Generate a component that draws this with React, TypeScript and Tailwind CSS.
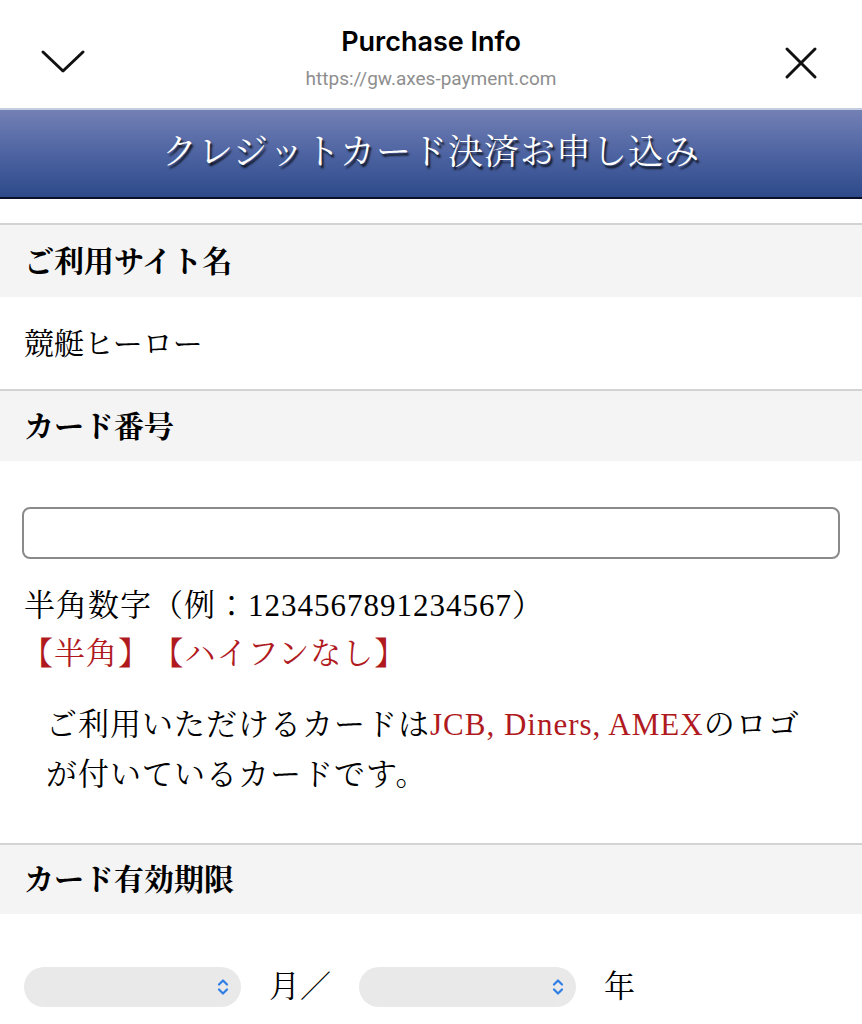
import { useState } from 'react';

const serif = {
    fontFamily: '"Liberation Serif", "Noto Serif CJK JP", "Noto Sans CJK JP", serif',
};

function SelectBox({ value, onChange }: { value: string; onChange: (v: string) => void }) {
    return (
        <div className="relative w-[217px] h-[40px] rounded-[20px] bg-[#e9e9e9]">
            <select
                value={value}
                onChange={(e) => onChange(e.target.value)}
                className="w-full h-full appearance-none bg-transparent rounded-[20px] pl-4 pr-10 text-[20px] outline-none"
            >
                <option value=""></option>
            </select>
            <svg
                className="absolute right-[12px] top-1/2 -translate-y-1/2 pointer-events-none"
                width="12"
                height="20"
                viewBox="0 0 12 20"
                fill="none"
                stroke="#2f7ee6"
                strokeWidth="2.2"
                strokeLinecap="round"
                strokeLinejoin="round"
            >
                <path d="M2 7.5 L6 3.5 L10 7.5" />
                <path d="M2 12.5 L6 16.5 L10 12.5" />
            </svg>
        </div>
    );
}

export default function App() {
    const [cardNo, setCardNo] = useState('');
    const [month, setMonth] = useState('');
    const [year, setYear] = useState('');

    return (
        <div className="w-[862px] min-h-[1024px] bg-white text-black overflow-hidden">
            {/* Header bar */}
            <div className="relative h-[108px] bg-white flex flex-col items-center">
                <button className="absolute left-[40px] top-[46px]">
                    <svg width="46" height="30" viewBox="0 0 46 30" fill="none" stroke="#111" strokeWidth="3" strokeLinecap="round" strokeLinejoin="round">
                        <path d="M3 6 L23 25 L43 6" />
                    </svg>
                </button>
                <div className="pt-[24px] text-[27px] leading-[36px] font-semibold" style={{ fontFamily: 'Inter, Roboto, sans-serif' }}>
                    Purchase Info
                </div>
                <div className="mt-[7px] text-[19px] leading-[24px] text-[#8e8e8e]" style={{ fontFamily: 'Roboto, Inter, sans-serif' }}>
                    https://gw.axes-payment.com
                </div>
                <button className="absolute right-[44px] top-[46px]">
                    <svg width="34" height="34" viewBox="0 0 34 34" fill="none" stroke="#111" strokeWidth="3" strokeLinecap="round">
                        <path d="M3 3 L31 31" />
                        <path d="M31 3 L3 31" />
                    </svg>
                </button>
            </div>

            {/* Title banner */}
            <div className="border-t-2 border-[#c5cde0]">
                <div className="h-[89px] flex items-center justify-center bg-gradient-to-b from-[#7380b4] via-[#4e64a2] to-[#2e4a8a] border-b-2 border-[#0b0f2a]">
                    <h1
                        className="text-[35px] text-white tracking-[1px] [text-shadow:2px_3px_2px_rgba(0,0,0,0.75)]"
                        style={serif}
                    >
                        クレジットカード決済お申し込み
                    </h1>
                </div>
            </div>

            <div className="h-[24px]" />

            <div style={serif}>
                {/* Site name */}
                <div className="border-t-2 border-[#d3d3d3] bg-[#f4f4f4] h-[74px] flex items-center px-[24px]">
                    <h2 className="text-[30px] font-bold">ご利用サイト名</h2>
                </div>
                <div className="h-[92px] flex items-center px-[24px] text-[30px]">競艇ヒーロー</div>

                {/* Card number */}
                <div className="border-t-2 border-[#d3d3d3] bg-[#f4f4f4] h-[72px] flex items-center px-[24px]">
                    <h2 className="text-[30px] font-bold">カード番号</h2>
                </div>
                <div className="px-[22px] pt-[46px] pb-[43px]">
                    <input
                        value={cardNo}
                        onChange={(e) => setCardNo(e.target.value)}
                        className="w-full h-[52px] rounded-[8px] border-2 border-[#8a8a8a] px-3 text-[24px] outline-none"
                    />
                    <p className="mt-[27px] pl-[2px] text-[31px] leading-[40px] tracking-[1px]">半角数字（例：1234567891234567）</p>
                    <p className="mt-[8px] text-[31px] leading-[40px] tracking-[1px] text-[#b01a1e]">
                        <span>【半角】</span>
                        <span className="ml-[18px]">【ハイフンなし】</span>
                    </p>
                    <p className="mt-[26px] pl-[24px] text-[31px] leading-[50px] tracking-[1px]">
                        ご利用いただけるカードは<span className="text-[#b01a1e]">JCB, Diners, AMEX</span>のロゴ
                        <br />
                        が付いているカードです。
                    </p>
                </div>

                {/* Expiry */}
                <div className="border-t-2 border-[#d3d3d3] bg-[#f4f4f4] h-[71px] flex items-center px-[24px]">
                    <h2 className="text-[30px] font-bold">カード有効期限</h2>
                </div>
                <div className="px-[24px] pt-[50px] pb-[30px] flex items-center">
                    <SelectBox value={month} onChange={setMonth} />
                    <span className="ml-[28px] text-[31px]">月／</span>
                    <div className="ml-[28px]">
                        <SelectBox value={year} onChange={setYear} />
                    </div>
                    <span className="ml-[28px] text-[31px]">年</span>
                </div>
            </div>
        </div>
    );
}
